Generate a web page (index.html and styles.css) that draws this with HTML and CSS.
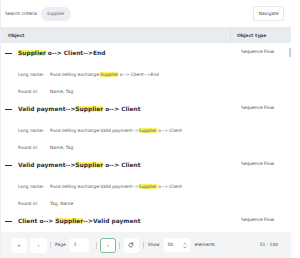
FILE: index.html
```html
<!DOCTYPE html>
<html lang="en">
<head>
    <meta charset="UTF-8">
    <title>Search results</title>
    <link rel="stylesheet" href="styles.css">
</head>
<body>
    <div class="panel">
        <div class="toolbar">
            <span class="criteria-label">Search criteria</span>
            <span class="chip">supplier</span>
            <button class="nav-btn">Navigate</button>
        </div>

        <div class="table">
            <div class="thead">
                <div class="th th-object">Object</div>
                <div class="th th-type">Object type</div>
            </div>

            <div class="tbody">
                <div class="row">
                    <div class="cell-object">
                        <div class="title"><span class="dash"></span><mark>Supplier</mark> o--&gt; Client--&gt;End</div>
                        <div class="meta meta-long"><span class="meta-key">Long name:</span>Food selling exchange:<mark>Supplier</mark> o--&gt; Client--&gt;End</div>
                        <div class="meta meta-found"><span class="meta-key">Found in:</span>Name, Tag</div>
                    </div>
                    <div class="cell-type">Sequence Flow</div>
                </div>
                <div class="row">
                    <div class="cell-object">
                        <div class="title"><span class="dash"></span>Valid payment--&gt;<mark>Supplier</mark> o--&gt; Client</div>
                        <div class="meta meta-long"><span class="meta-key">Long name:</span>Food selling exchange:Valid payment--&gt;<mark>Supplier</mark> o--&gt; Client</div>
                        <div class="meta meta-found"><span class="meta-key">Found in:</span>Name, Tag</div>
                    </div>
                    <div class="cell-type">Sequence Flow</div>
                </div>
                <div class="row">
                    <div class="cell-object">
                        <div class="title"><span class="dash"></span>Valid payment--&gt;<mark>Supplier</mark> o--&gt; Client</div>
                        <div class="meta meta-long"><span class="meta-key">Long name:</span>Food selling exchange:Valid payment--&gt;<mark>Supplier</mark> o--&gt; Client</div>
                        <div class="meta meta-found"><span class="meta-key">Found in:</span>Tag, Name</div>
                    </div>
                    <div class="cell-type">Sequence Flow</div>
                </div>
                <div class="row">
                    <div class="cell-object">
                        <div class="title"><span class="dash"></span>Client o--&gt; <mark>Supplier</mark>--&gt;Valid payment</div>
                        <div class="meta meta-long"><span class="meta-key">Long name:</span>Food selling exchange:Client o--&gt; <mark>Supplier</mark>--&gt;Valid payment</div>
                        <div class="meta meta-found"><span class="meta-key">Found in:</span>Name, Tag</div>
                    </div>
                    <div class="cell-type">Sequence Flow</div>
                </div>
                <div class="scroll-thumb"></div>
            </div>

            <div class="pager">
                <button class="pg-btn pg-first">&laquo;</button>
                <button class="pg-btn pg-prev">&lsaquo;</button>
                <span class="sep sep-1"></span>
                <span class="pg-label pg-page">Page</span>
                <span class="pg-input pg-num">2</span>
                <span class="sep sep-2"></span>
                <button class="pg-btn pg-next">&rsaquo;</button>
                <span class="sep sep-3"></span>
                <button class="pg-btn pg-refresh">
                    <svg width="6" height="6" viewBox="0 0 12 12"><path d="M10 6a4 4 0 1 1-1.2-2.85" fill="none" stroke="#555" stroke-width="1.6" stroke-linecap="round"/><path d="M9.6 1.2v2.6H7" fill="none" stroke="#555" stroke-width="1.6" stroke-linecap="round" stroke-linejoin="round"/></svg>
                </button>
                <span class="sep sep-4"></span>
                <span class="pg-label pg-show">Show</span>
                <span class="pg-input pg-size"><span>50</span>
                    <svg class="spin" width="4" height="7" viewBox="0 0 8 14"><path d="M1 5l3-3 3 3M1 9l3 3 3-3" fill="none" stroke="#777" stroke-width="1.2"/></svg>
                </span>
                <span class="pg-label pg-elements">elements</span>
                <span class="pg-range">51 - 100</span>
            </div>
        </div>
    </div>
</body>
</html>
```

FILE: styles.css
```css
body {
    margin: 0;
    font-family: "DejaVu Sans", sans-serif;
    background: #fff;
    color: #3b404c;
}
.panel {
    width: 300px;
    height: 258px;
    border-left: 1px solid #eceef1;
    box-sizing: border-box;
    overflow: hidden;
}
.toolbar {
    height: 27px;
    display: flex;
    align-items: center;
    padding: 0 16px 0 4px;
}
.criteria-label {
    font-size: 4.4px;
    color: #444;
}
.chip {
    margin-left: 4px;
    height: 14px;
    line-height: 14px;
    padding: 0 6px;
    border-radius: 7px;
    background: #eceef2;
    font-size: 4.4px;
    color: #666;
}
.nav-btn {
    margin-left: auto;
    width: 31px;
    height: 15px;
    padding: 0;
    border: 1px solid #e3e7ee;
    border-radius: 2px;
    background: #fff;
    font-family: inherit;
    font-size: 4.4px;
    color: #444;
}
.table {
    width: 290px;
}
.thead {
    display: grid;
    grid-template-columns: 230px 1fr;
    height: 16px;
    background: #e9ecef;
}
.th {
    display: flex;
    align-items: center;
    font-size: 4.5px;
    font-weight: bold;
    color: #3e4450;
}
.th-object {
    padding-left: 7px;
    border-right: 1px solid #dcdfe3;
}
.th-type {
    padding-left: 6px;
}
.tbody {
    position: relative;
    height: 189px;
    overflow: hidden;
}
.row {
    display: grid;
    grid-template-columns: 231px 1fr;
    height: 56px;
    padding-top: 4px;
    box-sizing: border-box;
}
.title {
    display: flex;
    align-items: center;
    height: 12px;
    padding-left: 4px;
    font-size: 5.9px;
    font-weight: bold;
    color: #2d3140;
    white-space: pre;
}
.dash {
    width: 7px;
    height: 1px;
    background: #333;
    margin-right: 6px;
}
mark {
    background: #fcf56c;
    color: inherit;
}
.meta {
    height: 10px;
    line-height: 10px;
    padding-left: 17px;
    font-size: 4.4px;
    color: #555;
    white-space: pre;
}
.meta-long {
    margin-top: 11px;
}
.meta-found {
    margin-top: 7px;
}
.meta-key {
    display: inline-block;
    width: 32px;
}
.cell-type {
    padding-left: 9px;
    height: 10px;
    line-height: 10px;
    font-size: 4.4px;
    color: #4a4f5a;
}
.scroll-thumb {
    position: absolute;
    left: 288px;
    top: 5px;
    width: 2px;
    height: 9px;
    background: #c9cdd2;
}
.pager {
    display: flex;
    align-items: center;
    height: 26px;
    padding: 0 13px 0 10px;
    background: #f3f4f6;
    font-size: 4.4px;
    line-height: 1;
    color: #444;
}
.pg-btn {
    height: 15px;
    padding: 0;
    border: 1px solid #fff;
    border-radius: 3px;
    background: #fff;
    font-family: inherit;
    font-size: 5px;
    line-height: 1;
    color: #555;
    display: flex;
    align-items: center;
    justify-content: center;
}
.pg-first { width: 16px; }
.pg-prev { width: 17px; margin-left: 3px; }
.pg-next { width: 16px; margin-left: 3px; border-color: #7dbd95; }
.pg-refresh { width: 15px; margin-left: 4px; }
.sep {
    width: 1px;
    height: 7px;
    background: #cfd3d8;
}
.sep-1 { margin-left: 3px; }
.sep-2 { margin-left: 7px; }
.sep-3 { margin-left: 3px; }
.sep-4 { margin-left: 4px; }
.pg-label {
    margin-left: 4px;
}
.pg-elements {
    margin-left: 5px;
}
.pg-input {
    margin-left: 4px;
    height: 14px;
    display: flex;
    align-items: center;
    padding-left: 4px;
    box-sizing: border-box;
    background: #fff;
    border-radius: 2px;
    color: #333;
}
.pg-num { width: 19px; }
.pg-size { width: 26px; justify-content: space-between; padding-right: 3px; }
.pg-range {
    margin-left: auto;
}
```
